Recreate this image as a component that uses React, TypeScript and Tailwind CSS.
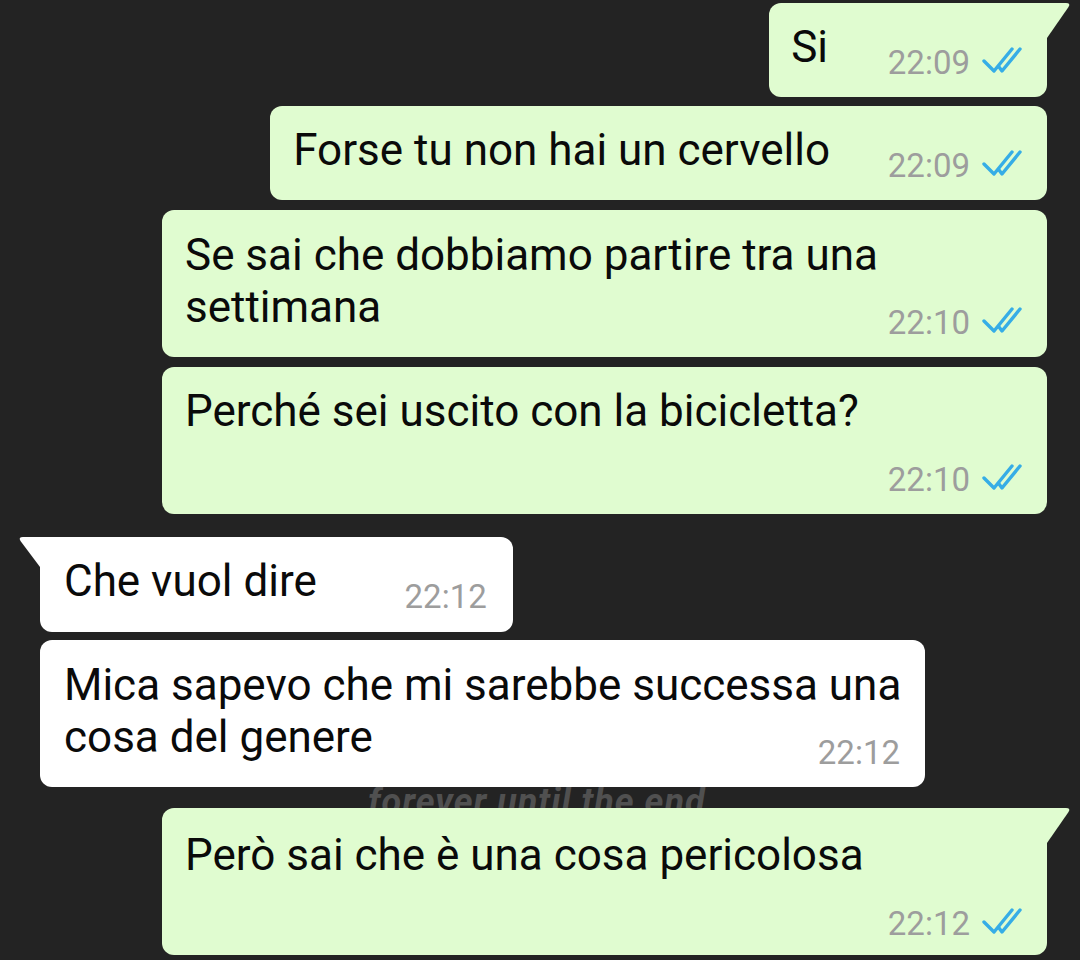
import React from "react";

const Check = () => (
  <svg width="40" height="28" viewBox="0 0 40 28" fill="none" stroke="#36ade6" strokeWidth="3.4" strokeLinecap="round" strokeLinejoin="round" className="mb-[6px]">
    <path d="M2 15 L12 25 L30 3" />
    <path d="M17 21 L20 25 L38 3" />
  </svg>
);

const TailRight = ({ fill }: { fill: string }) => (
  <svg width="24" height="36" viewBox="0 0 24 36" className="absolute left-full top-0">
    <path d="M0 0 H19 Q24 0 21.5 4 L0 35 Z" fill={fill} />
  </svg>
);

const TailLeft = ({ fill }: { fill: string }) => (
  <svg width="22" height="32" viewBox="0 0 22 32" className="absolute right-full top-0">
    <path d="M22 0 H5 Q0 0 2.5 4 L22 30 Z" fill={fill} />
  </svg>
);

const Time = ({ t, read = true }: { t: string; read?: boolean }) => (
  <div className="flex items-center gap-[12px]">
    <span className="text-[33px] leading-[36px] text-[#9d9d9d]">{t}</span>
    {read && <Check />}
  </div>
);

const GREEN = "#e0fcd0";

export default function App() {
  return (
    <div className="relative h-[960px] w-[1080px] overflow-hidden bg-[#232323] font-[family-name:Roboto,sans-serif] text-[#0a0a0a]">
      <div className="absolute left-[368px] top-[784px] text-[36px] font-bold italic leading-[36px] tracking-[1px] text-[#505050]">
        forever until the end
      </div>
      <div className="relative z-10 flex flex-col">
        {/* Bubble 1 */}
        <div className="relative mr-[33px] mt-[3px] flex flex-col self-end rounded-[12px] rounded-tr-none bg-[#e0fcd0] pb-[16px] pl-[22px] pr-[25px] pt-[18px]">
          <TailRight fill={GREEN} />
          <p className="pr-[194px] text-[44px] leading-[52px]">Si</p>
          <div className="-mt-[28px] flex justify-end">
            <Time t="22:09" />
          </div>
        </div>
        {/* Bubble 2 */}
        <div className="relative mr-[33px] mt-[9px] flex flex-col self-end rounded-[12px] bg-[#e0fcd0] pb-[16px] pl-[23px] pr-[25px] pt-[18px]">
          <p className="pr-[192px] text-[44px] leading-[52px]">Forse tu non hai un cervello</p>
          <div className="-mt-[28px] flex justify-end">
            <Time t="22:09" />
          </div>
        </div>
        {/* Bubble 3 */}
        <div className="relative mr-[33px] mt-[10px] flex w-[885px] flex-col self-end rounded-[12px] bg-[#e0fcd0] pb-[16px] pl-[23px] pr-[25px] pt-[19px]">
          <p className="text-[44px] leading-[52px]">Se sai che dobbiamo partire tra una settimana</p>
          <div className="-mt-[28px] flex justify-end">
            <Time t="22:10" />
          </div>
        </div>
        {/* Bubble 4 */}
        <div className="relative mr-[33px] mt-[10px] flex w-[885px] flex-col self-end rounded-[12px] bg-[#e0fcd0] pb-[16px] pl-[23px] pr-[25px] pt-[18px]">
          <p className="text-[44px] leading-[52px]">Perché sei uscito con la bicicletta?</p>
          <div className="mt-[25px] flex justify-end">
            <Time t="22:10" />
          </div>
        </div>
        {/* Bubble 5 */}
        <div className="relative ml-[40px] mt-[23px] flex flex-col self-start rounded-[12px] rounded-tl-none bg-white pb-[17px] pl-[24px] pr-[26px] pt-[18px]">
          <TailLeft fill="#ffffff" />
          <p className="pr-[170px] text-[44px] leading-[52px]">Che vuol dire</p>
          <div className="-mt-[28px] flex justify-end">
            <Time t="22:12" read={false} />
          </div>
        </div>
        {/* Bubble 6 */}
        <div className="relative ml-[40px] mt-[8px] flex w-[885px] flex-col self-start rounded-[12px] bg-white pb-[16px] pl-[24px] pr-[25px] pt-[19px]">
          <p className="-mr-[10px] text-[44px] leading-[52px]">Mica sapevo che mi sarebbe successa una cosa del genere</p>
          <div className="-mt-[28px] flex justify-end">
            <Time t="22:12" read={false} />
          </div>
        </div>
        {/* Bubble 7 */}
        <div className="relative mr-[33px] mt-[21px] flex w-[885px] flex-col self-end rounded-[12px] rounded-tr-none bg-[#e0fcd0] pb-[13px] pl-[23px] pr-[25px] pt-[21px]">
          <TailRight fill={GREEN} />
          <p className="text-[44px] leading-[52px]">Però sai che è una cosa pericolosa</p>
          <div className="mt-[25px] flex justify-end">
            <Time t="22:12" />
          </div>
        </div>
      </div>
    </div>
  );
}
